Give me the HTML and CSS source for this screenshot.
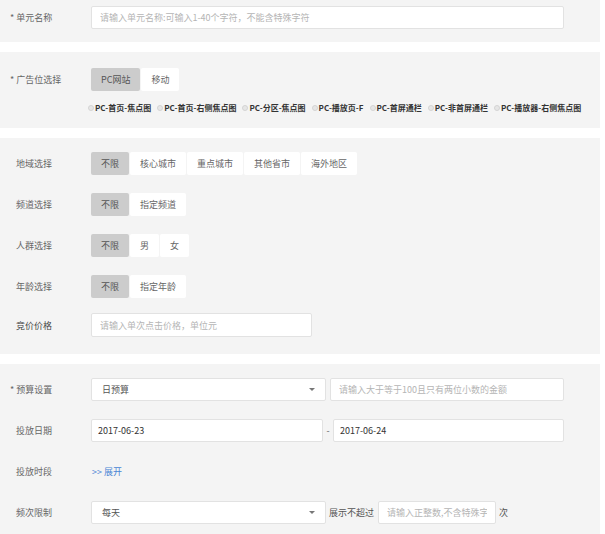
FILE: index.html
```html
<!DOCTYPE html>
<html lang="zh-CN">
<head>
    <meta charset="UTF-8">
    <title>广告单元设置</title>
    <link rel="stylesheet" href="styles.css">
</head>
<body>
    <div class="page">
        <!-- 单元名称 -->
        <div class="section section-name">
            <div class="row">
                <div class="label req">* 单元名称</div>
                <input class="text-input wide" type="text" placeholder="请输入单元名称:可输入1-40个字符，不能含特殊字符">
            </div>
        </div>

        <!-- 广告位 -->
        <div class="section section-slot">
            <div class="row">
                <div class="label req">* 广告位选择</div>
                <div class="btn-group">
                    <span class="opt active">PC网站</span>
                    <span class="opt">移动</span>
                </div>
            </div>
            <div class="radio-row">
                <label class="radio"><span class="dot"></span>PC-首页-焦点图</label>
                <label class="radio"><span class="dot"></span>PC-首页-右侧焦点图</label>
                <label class="radio"><span class="dot"></span>PC-分区-焦点图</label>
                <label class="radio"><span class="dot"></span>PC-播放页-F</label>
                <label class="radio"><span class="dot"></span>PC-首屏通栏</label>
                <label class="radio"><span class="dot"></span>PC-非首屏通栏</label>
                <label class="radio"><span class="dot"></span>PC-播放器-右侧焦点图</label>
            </div>
        </div>

        <!-- 定向 -->
        <div class="section section-target">
            <div class="row">
                <div class="label">地域选择</div>
                <div class="btn-group">
                    <span class="opt active">不限</span>
                    <span class="opt">核心城市</span>
                    <span class="opt">重点城市</span>
                    <span class="opt">其他省市</span>
                    <span class="opt">海外地区</span>
                </div>
            </div>
            <div class="row">
                <div class="label">频道选择</div>
                <div class="btn-group">
                    <span class="opt active">不限</span>
                    <span class="opt">指定频道</span>
                </div>
            </div>
            <div class="row">
                <div class="label">人群选择</div>
                <div class="btn-group">
                    <span class="opt active">不限</span>
                    <span class="opt">男</span>
                    <span class="opt">女</span>
                </div>
            </div>
            <div class="row">
                <div class="label">年龄选择</div>
                <div class="btn-group">
                    <span class="opt active">不限</span>
                    <span class="opt">指定年龄</span>
                </div>
            </div>
            <div class="row row-price">
                <div class="label dark">竞价价格</div>
                <input class="text-input price" type="text" placeholder="请输入单次点击价格，单位元">
            </div>
        </div>

        <!-- 预算 -->
        <div class="section section-budget">
            <div class="row">
                <div class="label req">* 预算设置</div>
                <div class="select">日预算<span class="caret"></span></div>
                <input class="text-input budget" type="text" placeholder="请输入大于等于100且只有两位小数的金额">
            </div>
            <div class="row">
                <div class="label">投放日期</div>
                <input class="text-input date" type="text" value="2017-06-23">
                <span class="dash">-</span>
                <input class="text-input date date-end" type="text" value="2017-06-24">
            </div>
            <div class="row">
                <div class="label">投放时段</div>
                <a class="expand" href="#">&gt;&gt; 展开</a>
            </div>
            <div class="row">
                <div class="label">频次限制</div>
                <div class="select">每天<span class="caret"></span></div>
                <span class="inline-text">展示不超过</span>
                <input class="text-input times" type="text" placeholder="请输入正整数,不含特殊字">
                <span class="inline-text">次</span>
            </div>
        </div>
    </div>
</body>
</html>
```

FILE: styles.css
```css
html, body {
    margin: 0;
    padding: 0;
    background: #fff;
}

body {
    font-family: "Noto Sans CJK SC", "Noto Sans", sans-serif;
    font-size: 9px;
    color: #666;
}

.page {
    width: 600px;
}

/* grey blocks separated by white strips */
.section {
    background: #f4f4f4;
    margin-bottom: 10px;
    display: flex;
    flex-direction: column;
}

.section-name {
    padding: 6px 0 13px;
}

.section-slot {
    padding: 16px 0 15px;
}

.section-target {
    padding: 14px 0 17px;
    gap: 18px;
}

.section-budget {
    padding: 14px 0 20px;
    gap: 18px;
}

.row {
    display: flex;
    align-items: center;
    height: 23px;
}

.label {
    width: 75px;
    padding-left: 16px;
    flex-shrink: 0;
    color: #666;
    font-size: 9px;
}

.label.req {
    padding-left: 10px;
    width: 81px;
}

.label.dark {
    color: #444;
}

/* toggle buttons */
.btn-group {
    display: flex;
    gap: 1px;
    height: 23px;
}

.opt {
    display: flex;
    align-items: center;
    padding: 0 10px;
    background: #fff;
    color: #666;
    border-radius: 2px;
}

.opt.active {
    background: #ccc;
    color: #555;
}

/* radio list */
.radio-row {
    display: flex;
    margin: 11px 0 0 88px;
    gap: 6px;
    white-space: nowrap;
}

.radio {
    display: flex;
    align-items: center;
    font-size: 8px;
    font-weight: bold;
    color: #333;
}

.dot {
    width: 6px;
    height: 6px;
    border-radius: 50%;
    background: #e6e6e6;
    border: 1px solid #d4d4d4;
    box-sizing: border-box;
    margin-right: 1px;
}

/* inputs */
.text-input {
    box-sizing: border-box;
    height: 23px;
    border: 1px solid #e2e2e2;
    border-radius: 2px;
    background: #fff;
    padding: 0 8px;
    font-family: inherit;
    font-size: 9px;
    color: #333;
    outline: none;
}

.text-input::placeholder {
    color: #b5b5b5;
}

.wide {
    width: 473px;
}

.price {
    width: 221px;
    height: 24px;
}

.row-price {
    height: 24px;
    margin-top: -3px;
}

.budget {
    width: 234px;
    margin-left: 4px;
}

.date {
    width: 232px;
    padding-left: 6px;
}

.date-end {
    width: 231px;
}

.dash {
    width: 10px;
    text-align: center;
    color: #666;
}

.times {
    width: 118px;
    margin-left: 4px;
}

.select {
    box-sizing: border-box;
    width: 235px;
    height: 23px;
    display: flex;
    align-items: center;
    justify-content: space-between;
    padding: 0 10px;
    background: #fff;
    border: 1px solid #e2e2e2;
    border-radius: 2px;
    color: #555;
}

.caret {
    width: 0;
    height: 0;
    border-left: 3px solid transparent;
    border-right: 3px solid transparent;
    border-top: 3px solid #777;
}

.expand {
    color: #4a86d4;
    text-decoration: none;
    margin-left: 1px;
}

.inline-text {
    margin-left: 3px;
    color: #555;
}
```
